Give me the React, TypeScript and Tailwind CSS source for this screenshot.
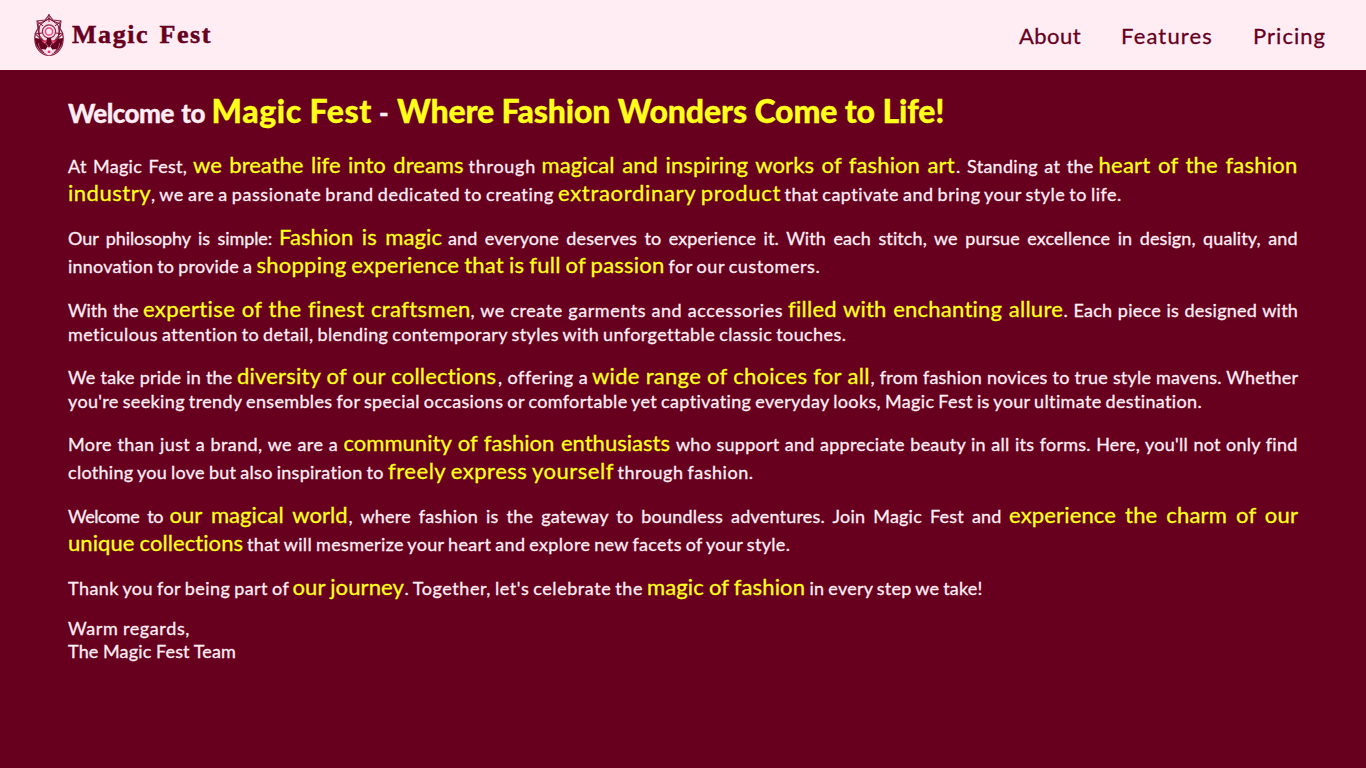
import React from "react";

type Run = { text: string; from: number; to: number; hl?: boolean };
type Line = { space: number; runs: Run[] };

const w = (text: string, from: number, to: number): Run => ({ text, from, to });
const y = (text: string, from: number, to: number): Run => ({ text, from, to, hl: true });

const LEFT = 68;
const FONT = '"Lato", sans-serif';

const heading: Line = {
  space: 7.5,
  runs: [
    w("Welcome to", 68, 205),
    y("Magic Fest", 211.5, 372),
    w("-", 379, 391),
    y("Where Fashion Wonders Come to Life!", 397, 944.5),
  ],
};

const paragraphs: Line[][] = [
  [
    {
      space: 6.5,
      runs: [
        w("At Magic Fest,", 68, 187),
        y("we breathe life into dreams", 193, 463.5),
        w("through", 468.5, 536),
        y("magical and inspiring works of fashion art", 541.5, 955.5),
        w(". Standing at the", 956, 1093.5),
        y("heart of the fashion", 1098.5, 1298),
      ],
    },
    {
      space: 4,
      runs: [
        y("industry", 68, 151),
        w(", we are a passionate brand dedicated to creating", 151, 554.5),
        y("extraordinary product", 558, 781.5),
        w("that captivate and bring your style to life.", 784.5, 1123),
      ],
    },
  ],
  [
    {
      space: 7.5,
      runs: [
        w("Our philosophy is simple:", 68, 273),
        y("Fashion is magic", 279, 442),
        w("and everyone deserves to experience it. With each stitch, we pursue excellence in design, quality, and", 448, 1298.5),
      ],
    },
    {
      space: 4,
      runs: [
        w("innovation to provide a", 68, 252.5),
        y("shopping experience that is full of passion", 256.5, 665),
        w("for our customers.", 668.5, 821),
      ],
    },
  ],
  [
    {
      space: 5.5,
      runs: [
        w("With the", 68, 138.5),
        y("expertise of the finest craftsmen", 143, 470.5),
        w(", we create garments and accessories", 470.5, 783.5),
        y("filled with enchanting allure", 788, 1063.5),
        w(". Each piece is designed with", 1063.5, 1298.5),
      ],
    },
    {
      space: 4,
      runs: [w("meticulous attention to detail, blending contemporary styles with unforgettable classic touches.", 68, 846.5)],
    },
  ],
  [
    {
      space: 5,
      runs: [
        w("We take pride in the", 68, 232.5),
        y("diversity of our collections", 237, 498),
        w(", offering a", 498, 587.5),
        y("wide range of choices for all", 592, 870.5),
        w(", from fashion novices to true style mavens. Whether", 870.5, 1298.5),
      ],
    },
    {
      space: 4,
      runs: [
        w("you're seeking trendy ensembles for special occasions or comfortable yet captivating everyday looks, Magic Fest is your ultimate destination.", 68, 1206.5),
      ],
    },
  ],
  [
    {
      space: 5.5,
      runs: [
        w("More than just a brand, we are a", 68, 338.5),
        y("community of fashion enthusiasts", 343.5, 671),
        w("who support and appreciate beauty in all its forms. Here, you'll not only find", 676, 1298.5),
      ],
    },
    {
      space: 4,
      runs: [
        w("clothing you love but also inspiration to", 68, 384.5),
        y("freely express yourself", 388, 615),
        w("through fashion.", 617.5, 753.5),
      ],
    },
  ],
  [
    {
      space: 8,
      runs: [
        w("Welcome to", 68, 163),
        y("our magical world", 169.5, 348.5),
        w(", where fashion is the gateway to boundless adventures. Join Magic Fest and", 348.5, 1003),
        y("experience the charm of our", 1009, 1298.5),
      ],
    },
    {
      space: 4,
      runs: [
        y("unique collections", 68, 243.5),
        w("that will mesmerize your heart and explore new facets of your style.", 247, 793),
      ],
    },
  ],
  [
    {
      space: 4,
      runs: [
        w("Thank you for being part of", 68, 290),
        y("our journey", 292.5, 404.5),
        w(". Together, let's celebrate the", 404.5, 643.5),
        y("magic of fashion", 647, 805.5),
        w("in every step we take!", 809.5, 983.5),
      ],
    },
  ],
  [
    { space: 4.5, runs: [w("Warm regards,", 68, 190)] },
    { space: 4.5, runs: [w("The Magic Fest Team", 68, 236.5)] },
  ],
];

const canvas = document.createElement("canvas").getContext("2d")!;

// Spread the letters of a run so that it fills the given width, with a fixed gap between words.
function fit(text: string, font: string, width: number, space: number): React.CSSProperties {
  canvas.font = font;
  const spaces = text.split(" ").length - 1;
  const natural = text.split(" ").reduce((sum, word) => sum + canvas.measureText(word).width, 0);
  const letters = text.length - spaces;
  const letterSpacing = (width - natural - spaces * space) / letters;
  const wordSpacing = space - canvas.measureText(" ").width - letterSpacing;
  return { width, letterSpacing, wordSpacing };
}

function TextLine({ line, title = false }: { line: Line; title?: boolean }) {
  const plainLine = line.runs.every((r) => !r.hl);
  const lineClass = title ? "h-10 leading-10" : plainLine ? "h-[23px] leading-[23px]" : "h-7 leading-7";
  return (
    <span className={`flex items-baseline whitespace-pre ${lineClass}`}>
      {line.runs.map((run, i) => {
        const size = title ? (run.hl ? 32 : 26) : run.hl ? 22 : 18;
        const start = i === 0 ? LEFT : line.runs[i - 1].to;
        const style = fit(
          run.text,
          `${title ? 900 : 400} ${size}px ${FONT}`,
          run.to - run.from,
          line.space + (run.hl && !title ? 1 : 0),
        );
        const sizeClass = title
          ? run.hl ? "text-[32px]" : "text-[26px]"
          : run.hl ? "text-[22px]" : "text-[18px]";
        return (
          <span
            key={i}
            className={`shrink-0 ${sizeClass} ${plainLine ? "leading-[23px]" : title ? "leading-10" : "leading-7"} ${
              run.hl ? "text-[#ffff1a]" : ""
            }`}
            style={{ ...style, marginLeft: run.from - start }}
          >
            {run.text}
          </span>
        );
      })}
    </span>
  );
}

function Emblem() {
  return (
    <svg viewBox="0 0 30 42" className="h-[42px] w-[30px]" fill="none">
      <ellipse cx="15" cy="25" rx="14.2" ry="16.400" fill="#ffedf3" stroke="#8c2748" strokeWidth="1.200" />
      <path
        d="M1 20C0 28 3 35 9 39l4 1.500c-2-3-2-5 1-8L8 25l-7-1ZM29 20c1 8-2 15-8 19l-4 1.500c2-3 2-5-1-8l6-7.500 7-1Z"
        fill="#67001f"
      />
      <path d="M4.500 29c0 4 2 7 5 9M25.500 29c0 4-2 7-5 9" stroke="#c77a93" strokeWidth=".7" />
      <path d="M15 1l4 5 8 1-1 8 3 5-6 5-3 4-5 2-5-2-3-4-6-5 3-5-1-8 8-1Z" fill="#fbdbe6" stroke="#8c2748" strokeWidth="1.100" />
      <path
        d="M15 0v8M3 7l6 5M27 7l-6 5M1 20l7-1M29 20l-7-1M4 10l11-5 11 5-2 15-9 5-9-5ZM15 4l9 7 2 9-6 7H10l-6-7 2-9Z"
        stroke="#7a1537"
        strokeWidth="1"
      />
      <circle cx="15" cy="17.500" r="6.600" fill="#fbdbe6" stroke="#8c2748" strokeWidth="1.200" />
      <circle cx="15" cy="17.500" r="3.600" fill="#ffe6ee" stroke="#f5447f" strokeWidth="1.500" />
      <path d="M13 24h4l.8 5-2.800 5-2.800-5Z" fill="#67001f" />
      <path d="M7.500 35l4 .5 3.500 5 3.500-5 4-.5-3 4-4.500 2.500L10.500 39Z" fill="#ffdbe7" />
      <circle cx="15" cy="37.800" r="1.400" fill="#f5296b" />
      <path d="M8.500 27l3.500.8M21.500 27l-3.500.8" stroke="#f5296b" strokeWidth="1.400" />
    </svg>
  );
}

const links = [
  { label: "About", width: 62 },
  { label: "Features", width: 92 },
  { label: "Pricing", width: 73 },
];

export default function App() {
  return (
    <div className="min-h-screen bg-[#67001f] font-['Lato',sans-serif] text-[#ffedf3] [-webkit-text-stroke:0.3px_currentColor]">
      <header className="flex h-[70px] items-center justify-between bg-[#ffedf3] pr-10 pl-[34px] text-[#67001f]">
        <a className="flex items-center gap-2">
          <Emblem />
          <span
            className="font-['Liberation_Serif',serif] text-[26px] leading-[42px] font-bold whitespace-pre [-webkit-text-stroke:0.5px_currentColor]"
            style={fit("Magic Fest", 'bold 26px "Liberation Serif", serif', 140, 10.5)}
          >
            Magic Fest
          </span>
        </a>
        <nav className="flex gap-10 pt-0.5">
          {links.map((link) => (
            <a
              key={link.label}
              className="text-[22px] leading-7"
              style={fit(link.label, `22px ${FONT}`, link.width, 5)}
            >
              {link.label}
            </a>
          ))}
        </nav>
      </header>
      <main className="px-[68px] pt-[21px]">
        <h1 className="mb-5 font-black">
          <TextLine line={heading} title />
        </h1>
        <div className="flex flex-col gap-4">
          {paragraphs.map((lines, i) => (
            <p key={i}>
              {lines.map((line, j) => (
                <TextLine key={j} line={line} />
              ))}
            </p>
          ))}
        </div>
      </main>
    </div>
  );
}
